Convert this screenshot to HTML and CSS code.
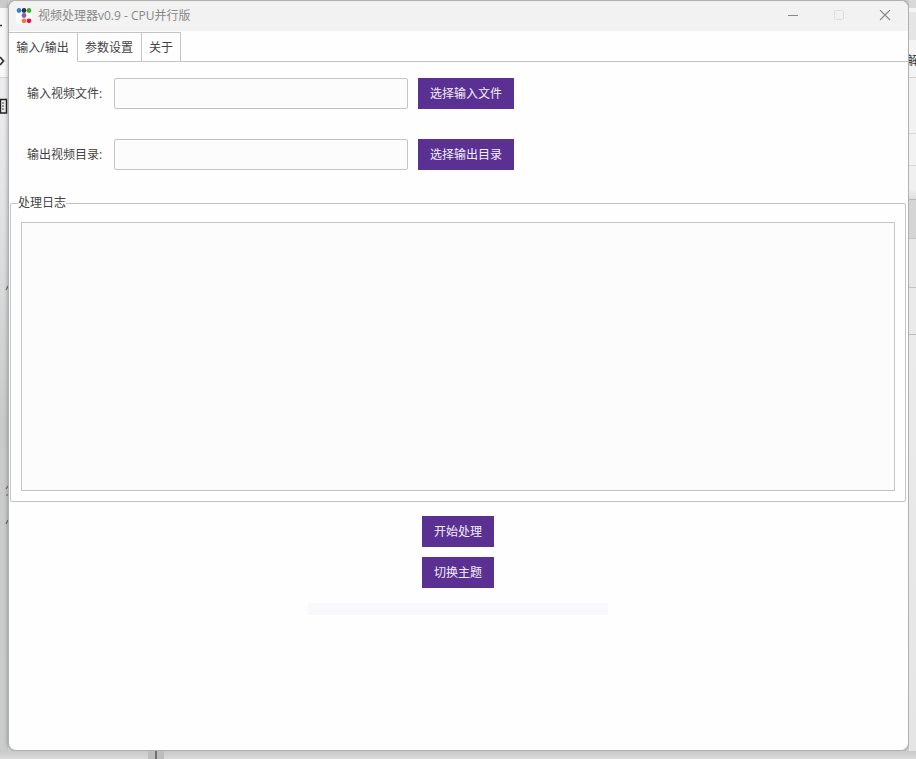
FILE: index.html
```html
<!DOCTYPE html>
<html lang="zh-CN">
<head>
    <meta charset="UTF-8">
    <meta name="viewport" content="width=device-width, initial-scale=1.0">
    <title>视频处理器v0.9 - CPU并行版</title>
    <link rel="stylesheet" href="styles.css">
</head>
<body>
    <!-- desktop showing on the left of the window -->
    <div class="desk-left">
        <div class="strip top"></div>
        <div class="strip tools">
            <svg width="8" height="69" viewBox="0 0 8 69">
                <path d="M0 17.500H2" stroke="#333" stroke-width="1.500"/>
                <path d="M0 49L3.500 53L0 57" stroke="#333" stroke-width="1.800" fill="none"/>
            </svg>
        </div>
        <div class="strip page">
            <svg width="8" height="460" viewBox="0 0 8 460">
                <path d="M0 21.500H6.500V35H0M.5 21V35" stroke="#222" stroke-width="1.400" fill="none"/>
                <path d="M3 24.500V32" stroke="#444" stroke-width="2" stroke-dasharray="1 2"/>
                <path d="M6 212L8 208M6 411L8 408M6 417H8M6 446L8 442" stroke="#765" stroke-width="1.200"/>
            </svg>
        </div>
    </div>

    <main class="window">
        <header class="titlebar">
            <svg class="logo" width="16" height="16" viewBox="0 0 16 16">
                <rect width="16" height="16" rx="1" fill="#fff"/>
                <circle cx="3" cy="2.500" r="2.400" fill="#3a7fd5"/>
                <circle cx="8" cy="2.500" r="2.400" fill="#2f3542"/>
                <circle cx="13" cy="2.500" r="2.400" fill="#3fae29"/>
                <circle cx="8" cy="7.500" r="2.400" fill="#8e5bb5"/>
                <circle cx="8" cy="12.800" r="2.400" fill="#f47b30"/>
                <circle cx="13" cy="12.800" r="2.400" fill="#ee1144"/>
            </svg>
            <h1>视频处理器v0.9 - CPU并行版</h1>
            <div class="controls">
                <button type="button" aria-label="最小化">
                    <svg width="12" height="12" viewBox="0 0 12 12"><path d="M1 5.500H11" stroke="#888"/></svg>
                </button>
                <button type="button" aria-label="最大化" disabled>
                    <svg width="12" height="12" viewBox="0 0 12 12"><rect x="1.500" y=".5" width="9" height="9" rx="1" fill="none" stroke="#ddd"/></svg>
                </button>
                <button type="button" aria-label="关闭">
                    <svg width="12" height="12" viewBox="0 0 12 12"><path d="M1 0L11 10M11 0L1 10" stroke="#888" stroke-width="1.100"/></svg>
                </button>
            </div>
        </header>

        <div class="tabs" role="tablist">
            <button type="button" role="tab" class="active" aria-selected="true">输入/输出</button>
            <button type="button" role="tab" aria-selected="false">参数设置</button>
            <button type="button" role="tab" aria-selected="false">关于</button>
        </div>

        <form class="panel">
            <div class="row">
                <label for="input-file">输入视频文件:</label>
                <input type="text" id="input-file">
                <button type="button" class="btn">选择输入文件</button>
            </div>
            <div class="row">
                <label for="output-dir">输出视频目录:</label>
                <input type="text" id="output-dir">
                <button type="button" class="btn">选择输出目录</button>
            </div>

            <fieldset class="log">
                <legend>处理日志</legend>
                <textarea aria-label="处理日志" readonly></textarea>
            </fieldset>

            <div class="actions">
                <button type="button" class="btn">开始处理</button>
                <button type="button" class="btn">切换主题</button>
                <progress value="0" max="100" aria-label="进度"></progress>
            </div>
        </form>
    </main>

    <!-- desktop showing on the right of the window -->
    <div class="desk-right">
        <div class="strip r1"></div>
        <div class="strip r2"></div>
        <div class="strip r3">解</div>
        <div class="strip r4"></div>
        <div class="strip r5"></div>
        <div class="strip r6"></div>
        <div class="strip r7"></div>
        <div class="strip r8"></div>
        <div class="strip r9"></div>
    </div>

    <div class="desk-bottom"><span class="divider"></span></div>
</body>
</html>
```

FILE: styles.css
```css
* {
    margin: 0;
    padding: 0;
    box-sizing: border-box;
}
body {
    display: grid;
    grid-template-columns: 8px 1fr 7px;
    grid-template-rows: 1fr 8px;
    min-height: 100vh;
    background: #d9dada;
    color: #444;
    font: 12px/16px "Open Sans", "Noto Sans CJK SC", sans-serif;
    overflow: hidden;
}
button, input, textarea {
    font: inherit;
    color: inherit;
}

/* desktop */
.desk-left,
.desk-right {
    display: flex;
    flex-direction: column;
    overflow: hidden;
}
.strip {
    flex: none;
    overflow: hidden;
}
.strip svg {
    display: block;
}
.top {
    height: 8px;
    background: #ccc;
}
.tools {
    height: 69px;
    background: #f8f8f8;
}
.page {
    flex: 1;
    border-top: 1px solid #d5d5d8;
    background: linear-gradient(#ededef 0, #e4e5e6 110px, #c9cbcb 340px, #cbcdcc 100%);
}
.r1 {
    height: 12px;
    background: #d9d9d9;
    border-bottom: 4px solid #f4f4f4;
}
.r2 {
    height: 28px;
    background: #e5e5e5;
}
.r3 {
    display: flex;
    justify-content: center;
    height: 38px;
    padding-top: 13px;
    background: #f4f4f4;
    border-bottom: 1px solid #d2d2d2;
    color: #333;
    white-space: nowrap;
}
.r4 {
    height: 56px;
    background: #f2f2f2;
    border-bottom: 1px solid #d8d8d8;
}
.r5 {
    height: 32px;
    background: #f2f2f2;
    border-bottom: 1px solid #d8d8d8;
}
.r6 {
    height: 34px;
    background: linear-gradient(#f0f0f0 70%, #dfdfdf);
    border-bottom: 1px solid #b5b5b5;
}
.r7 {
    height: 39px;
    background: #d5d5d5;
    border-bottom: 1px solid #c4c4c4;
}
.r8 {
    height: 49px;
    background: #e8e8e8;
    border-bottom: 1px solid #c4c4c4;
}
.r9 {
    flex: 1;
    background: linear-gradient(#eaeaea 46px, #bebebe 46px, #bebebe 47px, #ebebeb 47px, #e5e5e5);
}
.desk-bottom {
    grid-column: 1 / -1;
    padding-left: 148px;
    background: linear-gradient(#c9c9c9, #dadada);
}
.divider {
    display: block;
    width: 16px;
    height: 8px;
    background: linear-gradient(90deg, #bdbdbd 7px, #707070 7px, #707070 9px, #bdbdbd 9px);
}

/* window */
.window {
    display: flex;
    flex-direction: column;
    border: 1px solid #b0b0b0;
    border-radius: 8px;
    background: #fefefe;
    box-shadow: 0 0 4px rgba(0, 0, 0, 0.35);
    overflow: hidden;
}
.titlebar {
    display: flex;
    align-items: center;
    height: 30px;
    padding-left: 7px;
    background: #f2f2f2;
    color: #888;
}
.titlebar h1 {
    flex: 1;
    margin-left: 6px;
    font-size: 12px;
    font-weight: 400;
}
.controls {
    display: flex;
}
.controls button {
    display: flex;
    align-items: center;
    justify-content: center;
    width: 46px;
    height: 30px;
    border: none;
    background: none;
}

/* tabs */
.tabs {
    display: flex;
    height: 31px;
    padding-top: 1px;
}
.tabs::after {
    content: "";
    flex: 1;
    border-bottom: 1px solid #c4c4c6;
}
.tabs button {
    padding: 2px 7px 0;
    border: solid #c4c4c6;
    border-width: 1px 1px 1px 0;
    background: #fefefe;
}
.tabs button:not(:last-child) {
    padding-right: 8px;
}
.tabs .active {
    min-width: 69px;
    border-bottom-color: #fefefe;
}

/* input / output panel */
.panel {
    display: flex;
    flex-direction: column;
    padding: 16px 2px 16px 1px;
}
.row {
    display: flex;
    align-items: center;
    gap: 10px;
    margin-bottom: 30px;
    padding-left: 17px;
}
.row label {
    width: 77px;
}
.row input {
    width: 294px;
    height: 31px;
    padding: 0 6px;
    border: 1px solid #c4c4c6;
    border-radius: 2px;
    background: #fcfcfc;
}
.btn {
    height: 31px;
    padding: 1px 12px 0;
    border: none;
    background: #5a3093;
    color: #f4f0fa;
}
.log {
    margin-top: -5px;
    padding: 11px 10px 10px;
    border: 1px solid #c4c4c6;
    border-radius: 2px;
}
.log legend {
    margin-left: -3px;
}
.log textarea {
    display: block;
    width: 100%;
    height: 269px;
    padding: 6px;
    border: 1px solid #c4c4c6;
    background: #fcfcfc;
    resize: none;
}
.actions {
    display: flex;
    flex-direction: column;
    align-items: center;
    gap: 10px;
    margin-top: 14px;
}
.actions progress {
    appearance: none;
    width: 300px;
    height: 12px;
    margin-top: 5px;
    border: none;
}
.actions progress::-webkit-progress-bar {
    background: #f8f8fd;
}
.actions progress::-webkit-progress-value {
    background: #5a3093;
}
```
